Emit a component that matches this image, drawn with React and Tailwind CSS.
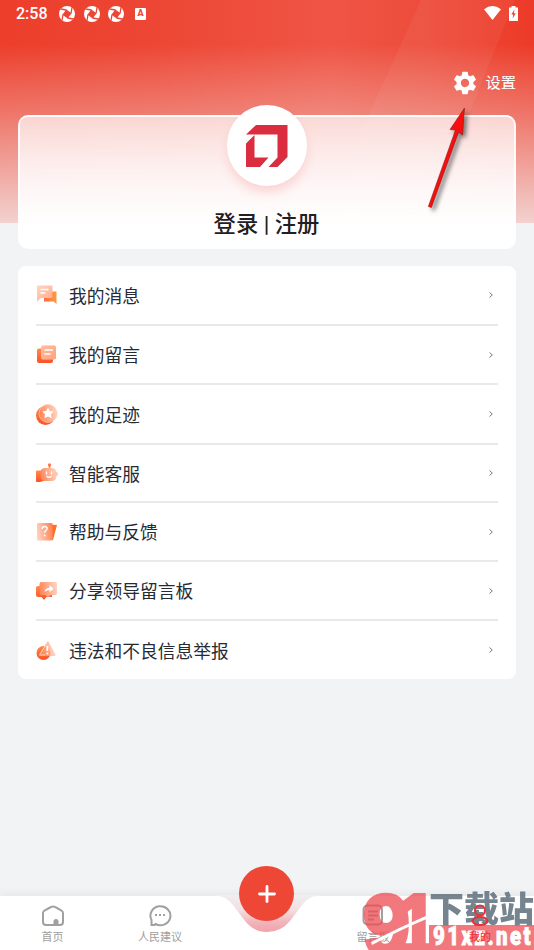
import React from "react";

const CJK = "font-['Roboto','Noto_Sans_CJK_SC',sans-serif]";

function Shutter() {
  return (
    <svg className="h-4 w-4" viewBox="0 0 16 16">
      <circle cx="8" cy="8" r="8" fill="#fff" />
      <path d="M7.300 3.400L12.600 7.300L8.700 12.600L3.400 8.700Z" fill="#ec4634" />
      <g stroke="#ec4634" strokeWidth="1.300" fill="none">
        <path d="M7.500 4L1.500 3M12 7.500L13 1.500M8.500 12L14.500 13M4 8.500L3 14.500" />
      </g>
    </svg>
  );
}

function StatusBar() {
  return (
    <div className="flex h-[28px] items-center pl-4 pr-[16px] text-white">
      <span className="w-[43px] font-['Roboto'] text-[16px] font-medium leading-[28px]">2:58</span>
      <div className="flex items-center gap-[8.5px]">
        <Shutter />
        <Shutter />
        <Shutter />
      </div>
      <span className="ml-[11px] flex h-3 w-[11px] items-center justify-center rounded-[1px] bg-white font-['Roboto'] text-[9px] font-black text-[#ed4936]">A</span>
      <div className="ml-auto flex items-center gap-2 pb-[2px]">
        <svg width="17" height="14" viewBox="0 0 17 14"><path d="M0 3.200Q8.500-3 17 3.200L8.500 14Z" fill="#fff" /></svg>
        <svg width="9" height="15" viewBox="0 0 9 15">
          <path d="M2.500 0h4v1.500H9V15H0V1.500h2.500Z" fill="#fff" />
          <path d="M5.500 3.500L2.300 8.500H4.200L3.600 12.500L6.800 7.300H4.900Z" fill="#ec4634" />
        </svg>
      </div>
    </div>
  );
}

function Defs() {
  return (
    <svg width="0" height="0" className="absolute">
      <defs>
        <linearGradient id="deep" x1="0" y1="0" x2="0" y2="1">
          <stop offset="0" stopColor="#ff8a4a" />
          <stop offset="1" stopColor="#fa5226" />
        </linearGradient>
        <linearGradient id="amber" x1="0" y1="0" x2="1" y2="0">
          <stop offset="0" stopColor="#ff6a3c" />
          <stop offset="1" stopColor="#ff9a3c" />
        </linearGradient>
        <linearGradient id="glass" x1="0" y1="0" x2="1" y2="1">
          <stop offset="0" stopColor="#ffd6c4" />
          <stop offset="1" stopColor="#ffa987" />
        </linearGradient>
        <linearGradient id="glassRight" x1="0" y1="0.6" x2="1" y2="0.4">
          <stop offset="0" stopColor="#ff8355" />
          <stop offset="1" stopColor="#ffd3c0" />
        </linearGradient>
      </defs>
    </svg>
  );
}

const icons = {
  message: (
    <>
      <path d="M8 6.500h12.500v12.500l-3-2.500H8Z" fill="url(#amber)" />
      <path d="M1 1.500Q1 .5 2 .5H15.500q1 0 1 1V12q0 1-1 1H5l-4 3.700Z" fill="url(#glass)" />
      <path d="M4.500 4.500h8M4.500 8h5" stroke="#fff" strokeWidth="1.500" />
    </>
  ),
  note: (
    <>
      <path d="M3 4.500h14V17q0 2-2 2H3q-2 0-2-2V6.500q0-2 2-2Z" fill="url(#deep)" />
      <rect x="5" y="1.500" width="15" height="14" rx="2" fill="url(#glass)" />
      <rect x="5" y="1.500" width="15" height="14" rx="2" fill="#ff9568" opacity=".4" />
      <path d="M8.500 6h8.500M8.500 10h6" stroke="#fff" strokeWidth="1.500" />
    </>
  ),
  track: (
    <>
      <circle cx="9.500" cy="11.500" r="9.500" fill="url(#deep)" />
      <circle cx="12" cy="9.500" r="9" fill="url(#glassRight)" stroke="#ffc8b0" strokeWidth=".7" />
      <path d="M12 3.500l1.800 3.500 3.900.6-2.800 2.700.7 4L12 12.500l-3.600 1.800.7-4L6.300 7.600l3.900-.6Z" fill="#fff" />
    </>
  ),
  robot: (
    <>
      <path d="M0 8.500q0-1 1-1h8v10L4 19H1q-1 0-1-1Z" fill="url(#deep)" />
      <path d="M13.500 1v5" stroke="#ff7b4a" strokeWidth="1.600" />
      <circle cx="13.500" cy="2" r="1.700" fill="#ff7b4a" />
      <rect x="4.500" y="5" width="16" height="13" rx="4.500" fill="url(#glassRight)" />
      <circle cx="20" cy="11" r="2" fill="#ffc6ae" />
      <path d="M10.500 9v2M15.500 9v2M11 13.500q2 1.500 4 0" stroke="#fff" strokeWidth="1.400" fill="none" strokeLinecap="round" />
    </>
  ),
  help: (
    <>
      <path d="M13 3.500l8 .5-4 15H12Z" fill="#ff7029" />
      <rect x="1" y="2" width="15.500" height="17.500" rx="1" fill="url(#glassRight)" transform="rotate(180 8.750 10.700)" />
      <path d="M6.200 8q0-2.500 2.500-2.500 2.400 0 2.400 2.100 0 1.400-1.500 2.200-.9.500-.9 2" fill="none" stroke="#fff" strokeWidth="1.400" />
      <circle cx="8.700" cy="14.500" r="1" fill="#fff" />
    </>
  ),
  share: (
    <>
      <path d="M2 6h14v11h-5.500L8 20l-2.500-3H2q-2 0-2-2V7.500Q0 6 2 6Z" fill="url(#deep)" />
      <path d="M5.500 2H19q2 0 2 2v9.500q0 1.500-2 1.500h-4.500L12 17.500 9.500 15h-4q-2 0-2-1.500V4q0-2 2-2Z" fill="url(#glassRight)" />
      <path d="M8.500 12q.3-4 5-4.300V5L17.500 8.700l-4 3.500v-2.200q-3 0-5 2Z" fill="#fff" />
    </>
  ),
  report: (
    <>
      <circle cx="7.500" cy="13" r="7" fill="url(#deep)" />
      <path d="M11 2Q12 .5 13 2.500l6.500 12q.8 1.500-1 1.500H4.500q-2 0-1-2Z" fill="url(#glassRight)" opacity=".8" />
      <path d="M11 3L3.500 15H9" fill="none" stroke="#ffd5c4" strokeWidth=".9" />
      <path d="M11.300 6v5" stroke="#fff" strokeWidth="1.800" />
      <circle cx="11.300" cy="13.500" r="1.100" fill="#fff" />
    </>
  ),
};

const menu = [
  { icon: "message", label: "我的消息", h: "h-[60px]" },
  { icon: "note", label: "我的留言", h: "h-[59px]" },
  { icon: "track", label: "我的足迹", h: "h-[60px]" },
  { icon: "robot", label: "智能客服", h: "h-[58px]" },
  { icon: "help", label: "帮助与反馈", h: "h-[59px]" },
  { icon: "share", label: "分享领导留言板", h: "h-[59px]" },
  { icon: "report", label: "违法和不良信息举报", h: "h-[58px]" },
];

function MenuRow({ icon, label, h, last }) {
  return (
    <div className={`flex items-center ${h} ${last ? "" : "border-b-2 border-[#e8e9ea]"}`}>
      <svg className="mt-px h-[22px] w-[22px] shrink-0" viewBox="0 0 22 22">{icons[icon]}</svg>
      <span className="ml-[11px] pt-[3px] text-[17.75px] leading-6 text-[#262a34]">{label}</span>
      <svg className="ml-auto mr-[4px] h-2 w-[6px]" viewBox="0 0 6 8"><path d="M1.500 1.500L4.300 4L1.500 6.500" fill="none" stroke="#777a80" strokeWidth="1" /></svg>
    </div>
  );
}

function Logo() {
  return (
    <svg width="42" height="42" viewBox="0 0 42 42" fill="#da2d40">
      <path d="M10 0H41.500V32L31.500 42H22.500L31.500 32.500V9.500H0Z" />
      <path d="M8.500 10V32.500H22.500L14 42H0V18.500Z" />
    </svg>
  );
}

function Header() {
  return (
    <svg className="absolute left-0 top-0" width="534" height="223" viewBox="0 0 534 223">
      <defs>
        <linearGradient id="red" x1="0" y1="0" x2="1" y2="0">
          <stop offset="0" stopColor="#ec3e2b" />
          <stop offset=".28" stopColor="#ed4634" />
          <stop offset=".62" stopColor="#ef5545" />
          <stop offset=".8" stopColor="#ed4c3a" />
          <stop offset="1" stopColor="#ec3b28" />
        </linearGradient>
        <linearGradient id="fade" x1="0" y1="0" x2="0" y2="1">
          <stop offset=".2" stopColor="#f3f3f4" stopOpacity="0" />
          <stop offset=".5" stopColor="#f3e9e9" stopOpacity=".32" />
          <stop offset="1" stopColor="#f3e6e6" stopOpacity=".88" />
        </linearGradient>
      </defs>
      <rect width="534" height="223" fill="url(#red)" />
      <path d="M421 0H515L425 223H340L362 130Z" fill="#fff" opacity=".05" />
      <rect width="534" height="223" fill="url(#fade)" />
    </svg>
  );
}

function ProfileCard() {
  return (
    <div className="relative mx-[18px] mt-[10px] flex h-[134px] flex-col items-center rounded-[10px] border-2 border-b-0 border-white/80 bg-linear-to-b from-white/68 from-0% via-white/86 via-50% to-white to-90%">
      <div className="-mt-[12px] mr-px flex h-[81px] w-20 items-center justify-center rounded-full bg-white pl-px shadow-[0_8px_12px_-2px_rgba(238,80,80,0.22)]">
        <Logo />
      </div>
      <div className="mr-px mt-[20px] text-[22.3px] font-medium leading-9 text-[#1f2023]">登录 | 注册</div>
    </div>
  );
}

function Arrow() {
  return (
    <svg className="absolute left-[420px] top-[98px]" width="60" height="120" viewBox="0 0 60 120">
      <g style={{ filter: "drop-shadow(3px 3px 2px rgba(60,60,60,.65))" }}>
        <path d="M44.500 10L42.500 37L38.700 34L11.400 109.500L8.400 108.500L35.500 32L30 31.500Z" fill="#f90d0d" stroke="#8e1717" strokeWidth=".6" />
      </g>
    </svg>
  );
}

function Tab({ label, active, children }) {
  return (
    <div className={`relative flex flex-col items-center pt-[8px] ${active ? "text-[#ee2f35]" : "text-[#a0a0a0]"}`}>
      <svg className="h-6 w-6" viewBox="0 0 24 24" fill="none" stroke="currentColor" strokeWidth="2">{children}</svg>
      <span className="mt-[2px] text-[11px] leading-4">{label}</span>
    </div>
  );
}

function TabBar() {
  return (
    <div className="relative mt-auto h-[54px] bg-white shadow-[0_-3px_8px_rgba(0,0,0,0.05)]">
      <svg className="absolute left-[217px] top-[-1px]" width="101" height="40" viewBox="0 0 101 40">
        <defs>
          <linearGradient id="notch" x1="0" y1="0" x2="0" y2="1">
            <stop offset="0" stopColor="#efeff1" />
            <stop offset=".4" stopColor="#f2dfe2" />
            <stop offset=".75" stopColor="#f1b3b9" />
            <stop offset="1" stopColor="#f2a2ab" />
          </linearGradient>
        </defs>
        <path d="M0 0H101V1Q92 1 85 10L73 26Q64 37 50 37Q37 37 28 26L16 10Q9 1 0 1Z" fill="url(#notch)" />
      </svg>
      <div className="absolute left-[239px] top-[-30px] flex h-[55px] w-[55px] items-center justify-center rounded-full bg-[#ee4736]">
        <svg width="18" height="18" viewBox="0 0 18 18"><path d="M9 1.500V16.500M1.500 9H16.500" stroke="#fff" strokeWidth="2.800" strokeLinecap="round" /></svg>
      </div>
      <div className="grid grid-cols-[105px_110px_104px_108px_106px]">
        <Tab label="首页">
          <path d="M10 3L3.500 6.500Q2 7.500 2 9V18Q2 21 5 21H19Q22 21 22 18V9Q22 7.500 20.500 6.500L14 3Q12 1.800 10 3Z" />
          <path d="M12.500 21V17.500Q12.500 15 15 15T17.500 17.500V21Z" fill="currentColor" stroke="none" />
        </Tab>
        <Tab label="人民建议">
          <path d="M3.500 21V16A10 9.500 0 1 1 7.500 20L6.500 21Z" />
          <path d="M7 11h2M11 11h2M15 11h2" strokeWidth="2.200" />
        </Tab>
        <span />
        <Tab label="留言板">
          <rect x="2.500" y="1.500" width="18.500" height="19" rx="4" />
          <path d="M7 7.500h10M7 11.500h10M7 15.500h6" />
        </Tab>
        <div className="z-10">
          <Tab label="我的" active>
            <circle cx="12" cy="6.500" r="5" />
            <ellipse cx="12" cy="17" rx="7.300" ry="4" />
          </Tab>
        </div>
      </div>
      <Watermark />
    </div>
  );
}

function Watermark() {
  return (
    <svg className="absolute left-[360px] top-[-8px]" width="174" height="62" viewBox="0 0 174 62">
      <g opacity=".74">
        <g fill="#ed4a50" stroke="#ed4a50" strokeWidth="4" fontSize="86" fontWeight="bold" fontFamily="Liberation Sans">
          <text x="3" y="66" textLength="47" lengthAdjust="spacingAndGlyphs">9</text>
          <text x="36" y="66" textLength="42" lengthAdjust="spacingAndGlyphs">1</text>
        </g>
        <rect x="69" y="37" width="105" height="25" fill="#ed4a50" />
      </g>
      <path d="M11 54Q40 39 68 27L69 30Q42 41 12 57Z" fill="#fff" />
      <text x="69" y="34" fontSize="35" fontWeight="900" fontFamily="Noto Sans CJK SC" fill="#677783" opacity=".9">下载站</text>
      <g transform="translate(73 57) scale(.82 1)">
        <text fontSize="25" fontWeight="900" fontFamily="Roboto" fill="#fff" stroke="#fff" strokeWidth=".8" textLength="119" lengthAdjust="spacing">91xz.net</text>
      </g>
    </svg>
  );
}

export default function App() {
  return (
    <div className={`relative flex h-[950px] w-[534px] flex-col overflow-hidden bg-[#f2f3f5] ${CJK}`}>
      <Defs />
      <Header />
      <div className="relative flex flex-1 flex-col">
        <StatusBar />
        <div className="mt-[32px] flex h-[45px] items-center justify-end pr-[18px] text-white">
          <svg className="h-7 w-7" viewBox="0 0 24 24" fill="currentColor"><path d="M19.140 12.940c.040-.3.060-.610.060-.940 0-.320-.020-.640-.070-.940l2.030-1.580a.49.49 0 0 0 .12-.610l-1.920-3.320a.488.488 0 0 0-.590-.220l-2.390.960c-.5-.380-1.030-.7-1.620-.940l-.360-2.540a.484.484 0 0 0-.480-.410h-3.840c-.240 0-.430.170-.470.410l-.360 2.540c-.590.240-1.130.570-1.620.940l-2.390-.960c-.220-.080-.470 0-.590.220L2.740 8.870c-.120.210-.080.470.120.610l2.030 1.580c-.050.3-.090.630-.090.940s.020.640.070.940l-2.030 1.580a.49.49 0 0 0-.12.610l1.920 3.320c.120.220.370.290.590.220l2.390-.960c.5.380 1.030.7 1.620.940l.360 2.540c.050.240.240.410.480.410h3.840c.240 0 .440-.170.470-.410l.360-2.540c.590-.240 1.130-.560 1.620-.940l2.390.960c.220.080.470 0 .590-.220l1.920-3.320a.49.49 0 0 0-.12-.610l-2.010-1.580zM12 15.600A3.610 3.610 0 0 1 8.400 12c0-1.980 1.620-3.600 3.600-3.600s3.600 1.620 3.600 3.600-1.620 3.600-3.600 3.600z" /></svg>
          <span className="ml-[6px] text-[15.300px] leading-5">设置</span>
        </div>
        <ProfileCard />
        <div className="mx-[18px] mt-[17px] h-[413px] rounded-[8px] bg-white px-[18px]">
          {menu.map((m, i) => (
            <MenuRow key={m.icon} {...m} last={i === menu.length - 1} />
          ))}
        </div>
        <TabBar />
      </div>
      <Arrow />
    </div>
  );
}
